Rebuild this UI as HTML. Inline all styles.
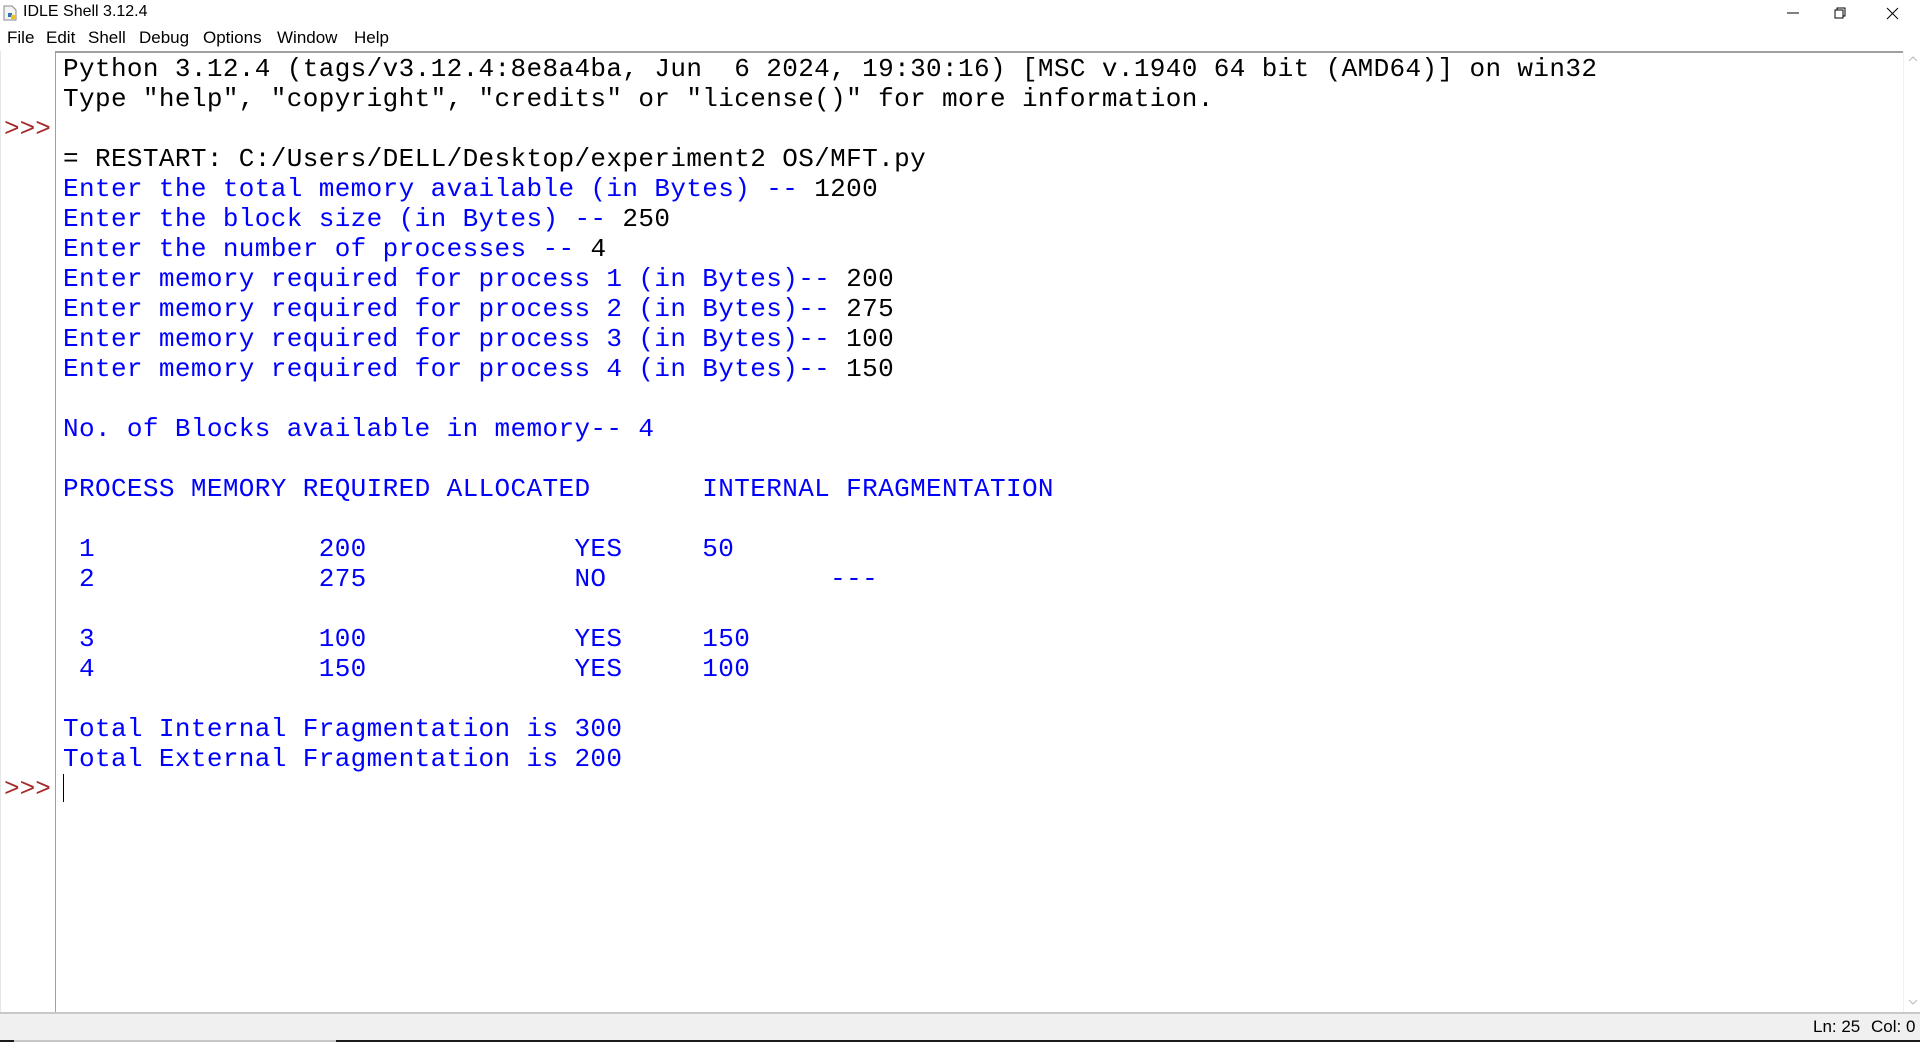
<!DOCTYPE html>
<html><head><meta charset="utf-8"><style>
*{margin:0;padding:0;box-sizing:border-box}
body{width:1920px;height:1042px;background:#fff;position:relative;overflow:hidden;font-family:"Liberation Sans",sans-serif}
.title{position:absolute;left:0;top:0;width:1920px;height:26px;background:#fff}
.title .t{position:absolute;left:23px;top:3px;font-size:16px;color:#000}
.menu{position:absolute;left:0;top:26px;height:25px;width:1920px;background:#fff;font-size:17px}
.menu span{position:absolute;top:2px}
.gut{position:absolute;left:0;top:51px;width:56px;height:961px;background:#fff;border-right:1px solid #a0a0a0;border-left:1px solid #e6e6e6}
.txt{position:absolute;left:56px;top:51px;width:1847px;height:961px;border-top:2px solid #a0a0a0}
.sb{position:absolute;left:1903px;top:51px;width:17px;height:961px;background:#fff;border-left:1px solid #f0f0f0}
pre{position:absolute;top:54px;font-family:"Liberation Mono",monospace;font-size:26px;line-height:30px;color:#00f;white-space:pre;letter-spacing:0.38px}
.k{color:#000}.p{color:#a52a2a}
.status{position:absolute;left:0;top:1012px;width:1920px;height:28px;background:#f0f0f0;border-top:2px solid #c8c8c8;font-size:17px}
.bot{position:absolute;left:0;top:1040px;width:1920px;height:2px;background:#1c1c1c}
</style></head><body>
<div class="title"><svg style="position:absolute;left:3px;top:5px" width="14" height="16"><path d="M1 1h8l4 4v10H1z" fill="#f4f4f4" stroke="#888"/><rect x="5" y="8" width="4" height="4" fill="#3a72a8"/><rect x="8" y="10" width="4" height="4" fill="#f0c020"/></svg><span class="t">IDLE Shell 3.12.4</span>
<svg style="position:absolute;left:1784px;top:6px" width="130" height="16"><path d="M3 7h12" stroke="#000"/><rect x="51" y="4" width="8" height="8" fill="none" stroke="#000"/><path d="M53 4V2h8v8h-2" fill="none" stroke="#000"/><path d="M103 2l11 11M114 2l-11 11" stroke="#000"/></svg></div>
<div class="menu"><span style="left:7px">File</span><span style="left:46px">Edit</span><span style="left:88px">Shell</span><span style="left:139px">Debug</span><span style="left:203px">Options</span><span style="left:277px">Window</span><span style="left:354px">Help</span></div>
<div class="gut"></div>
<div class="txt"></div>
<div class="sb"><svg style="position:absolute;left:4px;top:4px" width="10" height="8"><path d="M1 6l4-4 4 4" fill="none" stroke="#bbb"/></svg><svg style="position:absolute;left:4px;top:947px" width="10" height="8"><path d="M1 2l4 4 4-4" fill="none" stroke="#bbb"/></svg></div>
<pre class="p" style="left:4px;letter-spacing:0">


&gt;&gt;&gt;





















&gt;&gt;&gt;</pre>
<pre style="left:63px"><span class="k">Python 3.12.4 (tags/v3.12.4:8e8a4ba, Jun  6 2024, 19:30:16) [MSC v.1940 64 bit (AMD64)] on win32
Type "help", "copyright", "credits" or "license()" for more information.

= RESTART: C:/Users/DELL/Desktop/experiment2 OS/MFT.py</span>
Enter the total memory available (in Bytes) -- <span class="k">1200</span>
Enter the block size (in Bytes) -- <span class="k">250</span>
Enter the number of processes -- <span class="k">4</span>
Enter memory required for process 1 (in Bytes)-- <span class="k">200</span>
Enter memory required for process 2 (in Bytes)-- <span class="k">275</span>
Enter memory required for process 3 (in Bytes)-- <span class="k">100</span>
Enter memory required for process 4 (in Bytes)-- <span class="k">150</span>

No. of Blocks available in memory-- 4

PROCESS MEMORY REQUIRED ALLOCATED       INTERNAL FRAGMENTATION

 1              200             YES     50
 2              275             NO              ---

 3              100             YES     150
 4              150             YES     100

Total Internal Fragmentation is 300
Total External Fragmentation is 200
<span class="k" style="display:inline-block;width:1px;height:28px;background:#000;vertical-align:-6px"></span></pre>
<div class="status"><span style="position:absolute;left:1813px;top:3px">Ln: 25</span><span style="position:absolute;left:1871px;top:3px">Col: 0</span></div>
<div class="bot"><div style="position:absolute;left:14px;width:322px;height:2px;top:0;background:#c8c8c8"></div></div>
</body></html>
